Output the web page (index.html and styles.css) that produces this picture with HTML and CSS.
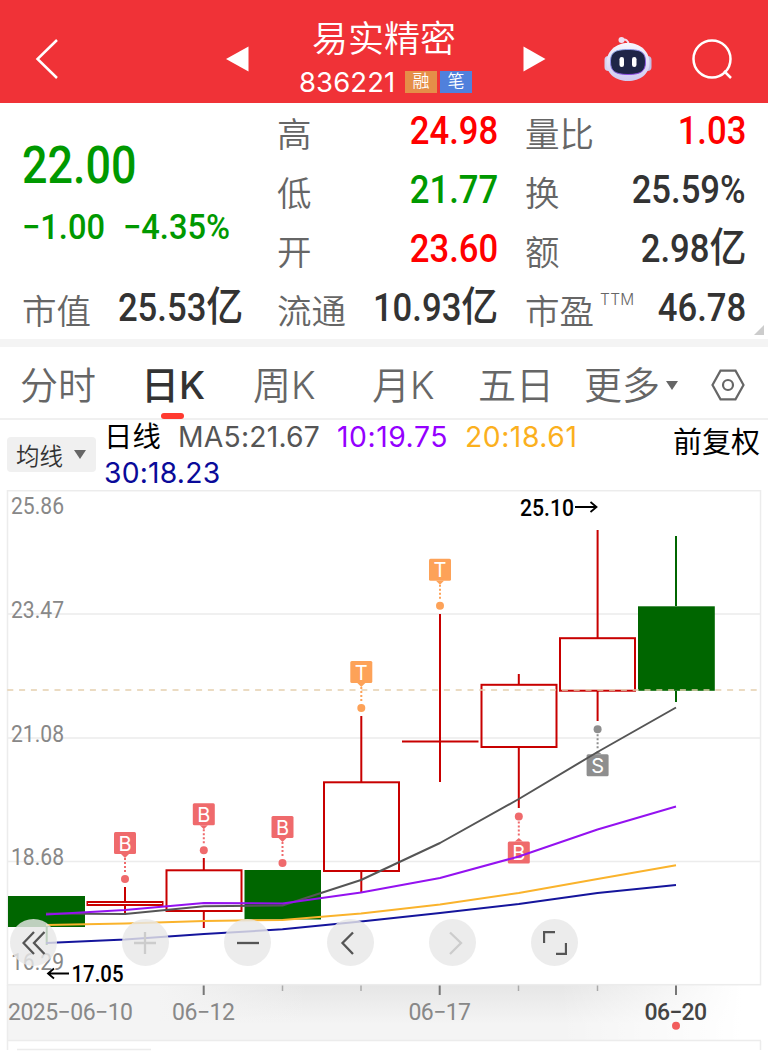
FILE: index.html
```html
<!DOCTYPE html>
<html lang="zh-CN">
<head>
    <meta charset="UTF-8">
    <title>易实精密 836221</title>
    <link rel="stylesheet" href="styles.css">
</head>
<body>
    <header class="header">
        <svg class="back" width="24" height="42" viewBox="0 0 24 42"><path d="M22 2 L2.500 21 L22 40"/></svg>
        <svg class="prev" width="23" height="26" viewBox="0 0 23 26"><path d="M0 13 L22.500 0.500 V25.500 Z"/></svg>
        <div class="stock">
            <div class="stock-name">易实精密</div>
            <div class="stock-code">
                <span class="code">836221</span>
                <span class="tag orange">融</span>
                <span class="tag blue">笔</span>
            </div>
        </div>
        <svg class="next" width="23" height="26" viewBox="0 0 23 26"><path d="M0.500 0.500 L22.500 13 L0.500 25.500 Z"/></svg>
        <svg class="robot" width="50" height="46" viewBox="0 0 50 46">
            <defs>
                <linearGradient id="head" x1="0" y1="0" x2="0" y2="1">
                    <stop offset="0" stop-color="#f7f6ff"/>
                    <stop offset="1" stop-color="#cfcaf0"/>
                </linearGradient>
                <linearGradient id="rim" x1="0" y1="0" x2="0.600" y2="1">
                    <stop offset="0" stop-color="#8fb6ea"/>
                    <stop offset="1" stop-color="#8a45e0"/>
                </linearGradient>
            </defs>
            <path d="M18 4 Q25.500 2 25.500 9" fill="none" stroke="#f2dfef" stroke-width="2"/>
            <circle cx="18.500" cy="4" r="3" fill="#eedff2"/>
            <rect x="1.500" y="20" width="8" height="15" rx="4" fill="#d6d2ee"/>
            <rect x="40.500" y="20" width="8" height="15" rx="4" fill="#c4bfe6"/>
            <path d="M25 7 C37 7 46.500 15 46.500 27 C46.500 38 37 45 25 45 C13 45 3.500 38 3.500 27 C3.500 15 13 7 25 7 Z" fill="url(#head)"/>
            <path d="M25 13.500 C39 13.500 42.500 17 42.500 26 C42.500 35 38 38.500 25 38.500 C12 38.500 7.500 35 7.500 26 C7.500 17 11 13.500 25 13.500 Z" fill="#1f2547" stroke="url(#rim)"/>
            <rect x="16.500" y="21" width="4.500" height="10" rx="2.200" fill="#fff"/>
            <rect x="29" y="21" width="4.500" height="10" rx="2.200" fill="#fff"/>
        </svg>
        <svg class="search" width="42" height="42" viewBox="0 0 42 42"><circle cx="21" cy="21" r="18.500"/><path d="M33 33 L40 40"/></svg>
    </header>

    <section class="quote">
        <div class="price">
            <div class="last"><span class="num">22.00</span></div>
            <div class="change"><span class="num">−1.00</span><span class="num">−4.35%</span></div>
        </div>
        <div class="stat"><span class="label">高</span><span class="num up">24.98</span></div>
        <div class="stat"><span class="label">量比</span><span class="num up">1.03</span></div>
        <div class="stat"><span class="label">低</span><span class="num down">21.77</span></div>
        <div class="stat"><span class="label">换</span><span class="num">25.59%</span></div>
        <div class="stat"><span class="label">开</span><span class="num up">23.60</span></div>
        <div class="stat"><span class="label">额</span><span class="num">2.98<i>亿</i></span></div>
        <div class="stat"><span class="label">市值</span><span class="num">25.53<i>亿</i></span></div>
        <div class="stat"><span class="label">流通</span><span class="num">10.93<i>亿</i></span></div>
        <div class="stat"><span class="label">市盈<sup>TTM</sup></span><span class="num">46.78</span></div>
        <div class="corner"></div>
    </section>

    <nav class="tabs">
        <span class="tab">分时</span>
        <span class="tab active">日K</span>
        <span class="tab">周K</span>
        <span class="tab">月K</span>
        <span class="tab">五日</span>
        <span class="tab more">更多<svg width="12" height="9" viewBox="0 0 12 9"><path d="M0 0 H12 L6 9 Z"/></svg></span>
        <svg class="settings" width="34" height="32" viewBox="0 0 34 32"><path d="M9.500 1.700 H24.500 L32.500 16 L24.500 30.300 H9.500 L1.500 16 Z"/><circle cx="17" cy="16" r="5"/></svg>
    </nav>

    <section class="indicator">
        <div class="select">均线<svg width="12" height="9" viewBox="0 0 12 9"><path d="M0 0 H12 L6 9 Z"/></svg></div>
        <div class="averages">
            <span class="period">日线</span>
            <span class="ma5">MA5:21.67</span>
            <span class="ma10">10:19.75</span>
            <span class="ma20">20:18.61</span>
            <span class="ma30">30:18.23</span>
        </div>
        <div class="adjust">前复权</div>
    </section>

    <section class="chart">
        <svg class="kline" width="768" height="561" viewBox="0 490 768 561">
            <defs>
                <linearGradient id="band" x1="0" y1="0" x2="0" y2="1">
                    <stop offset="0" stop-color="#e6e6e6"/>
                    <stop offset="0.700" stop-color="#f4f4f4"/>
                    <stop offset="1" stop-color="#f4f4f4"/>
                </linearGradient>
                <linearGradient id="fadeLeft" x1="0" y1="0" x2="1" y2="0">
                    <stop offset="0.500" stop-color="#f4f4f4"/>
                    <stop offset="1" stop-color="#f4f4f4" stop-opacity="0"/>
                </linearGradient>
                <linearGradient id="fadeRight" x1="0" y1="0" x2="1" y2="0">
                    <stop offset="0" stop-color="#fff" stop-opacity="0"/>
                    <stop offset="0.900" stop-color="#fff"/>
                </linearGradient>
                <g id="pinDown">
                    <rect x="-11" y="-11" width="22" height="22" rx="1.500"/>
                    <path d="M-4 11 L0 15 L4 11 Z"/>
                    <path class="dots" d="M0 15 V29"/>
                    <circle cy="36" r="4"/>
                </g>
                <g id="pinUp">
                    <rect x="-11" y="-11" width="22" height="22" rx="1.500"/>
                    <path d="M-4 -11 L0 -14.500 L4 -11 Z"/>
                    <path class="dots" d="M0 -17 V-33"/>
                    <circle cy="-36" r="4"/>
                </g>
            </defs>

            <!-- date axis background -->
            <rect x="7" y="985" width="754" height="55" fill="url(#band)"/>
            <rect x="7" y="985" width="300" height="55" fill="url(#fadeLeft)"/>
            <rect x="560" y="985" width="201" height="55" fill="url(#fadeRight)"/>

            <!-- frame and grid -->
            <g class="grid">
                <rect x="7.500" y="490.700" width="753" height="494"/>
                <path d="M8 614 H760 M8 738 H760 M8 861.500 H760"/>
                <path d="M7.500 985 V1050 M7.500 1040.500 H761 M760.500 1041 V1050"/>
                <path d="M17 1049.500 H151"/>
            </g>
            <g class="ticks">
                <path d="M203.700 985.500 V995 M439.700 985.500 V995 M676 985.500 V995"/>
                <path class="minor" d="M282.500 985.500 V991 M361 985.500 V991 M518.500 985.500 V991 M597.500 985.500 V991"/>
            </g>

            <g class="scale">
                <text x="11" y="514" textLength="53" lengthAdjust="spacingAndGlyphs">25.86</text>
                <text x="11" y="617.500" textLength="53" lengthAdjust="spacingAndGlyphs">23.47</text>
                <text x="11" y="741.500" textLength="53" lengthAdjust="spacingAndGlyphs">21.08</text>
                <text x="11" y="864.500" textLength="53" lengthAdjust="spacingAndGlyphs">18.68</text>
                <text x="11" y="969.500" textLength="53" lengthAdjust="spacingAndGlyphs">16.29</text>
            </g>

            <!-- candles -->
            <g class="fall">
                <rect x="8" y="896" width="77" height="31"/>
                <rect x="244.500" y="870" width="76.500" height="49.500"/>
                <rect x="638" y="606.300" width="76.800" height="84.500"/>
                <path d="M46.700 927 V945 M676 536 V606 M676 691 V702"/>
            </g>
            <g class="rise">
                <rect x="87.500" y="902" width="75" height="3"/>
                <rect x="166.500" y="870.300" width="75" height="40.700"/>
                <rect x="324" y="782.300" width="75" height="88.700"/>
                <rect x="481.500" y="684.800" width="75" height="62.200"/>
                <rect x="560" y="638.200" width="75" height="52.500"/>
                <path d="M125 887 V902 M125 905 V915 M203.800 858 V870 M203.800 911 V928"/>
                <path d="M361.300 716 V782 M361.300 871 V893 M440 614 V782 M402 741.500 H478.500"/>
                <path d="M518.800 674 V685 M518.800 747 V808 M597.600 530 V638 M597.600 691 V721"/>
            </g>
            <path class="current" d="M7.300 690 H760"/>

            <!-- trade points -->
            <g class="point buy">
                <use href="#pinDown" x="125" y="843"/><text x="125" y="850.500">B</text>
                <use href="#pinDown" x="203.800" y="814.300"/><text x="203.800" y="821.800">B</text>
                <use href="#pinDown" x="282.500" y="827"/><text x="282.500" y="834.500">B</text>
                <use href="#pinUp" x="518.800" y="852.500"/><text x="518.800" y="860">B</text>
            </g>
            <g class="point trade">
                <use href="#pinDown" x="361.300" y="672"/><text x="361.300" y="679.500">T</text>
                <use href="#pinDown" x="440" y="569.800"/><text x="440" y="577.300">T</text>
            </g>
            <g class="point sell">
                <use href="#pinUp" x="597.600" y="765.300"/><text x="597.600" y="772.800">S</text>
            </g>

            <g class="lines">
                <polyline stroke="#555" points="46,913.500 125,914 204,906.300 282.500,905.500 361,880 440,843 518.800,799 597.500,752 676,707.500"/>
                <polyline stroke="#9412f0" points="46,914.500 125,910 204,903 282.500,903.500 361,892.500 440,878 518.800,856.500 597.500,829.500 676,806.500"/>
                <polyline stroke="#fab32c" points="46,925 125,923.500 204,921 282.500,920 361,913.500 440,904.500 518.800,893 597.500,879 676,865.300"/>
                <polyline stroke="#15159c" points="46,943 125,939.500 204,934 282.500,929.300 361,921.500 440,913 518.800,904 597.500,893 676,885"/>
            </g>

            <g class="extreme">
                <text x="520" y="515.500" textLength="54" lengthAdjust="spacingAndGlyphs">25.10</text>
                <path d="M575 507 H596.500 M590.500 502 L596.500 507 L590.500 512"/>
                <text x="71.500" y="981.500" textLength="52" lengthAdjust="spacingAndGlyphs">17.05</text>
                <path d="M69 973.500 H48 M54 968.500 L48 973.500 L54 978.500"/>
            </g>

            <g class="dates">
                <text x="8" y="1020" textLength="125">2025−06−10</text>
                <text x="172" y="1020" textLength="63">06−12</text>
                <text x="408.500" y="1020" textLength="62.500">06−17</text>
                <text class="today" x="644.500" y="1020" textLength="62.500">06−20</text>
                <circle cx="676" cy="1025.700" r="4"/>
            </g>
        </svg>

        <div class="controls">
            <button class="first"><svg width="24" height="24" viewBox="0 0 24 24"><path d="M12 1 L1.500 12 L12 23 M22.500 1 L12 12 L22.500 23"/></svg></button>
            <button class="off"><svg width="24" height="24" viewBox="0 0 24 24"><path d="M12 1 V23 M1 12 H23"/></svg></button>
            <button><svg width="24" height="24" viewBox="0 0 24 24"><path d="M1 12 H23"/></svg></button>
            <button><svg width="24" height="24" viewBox="0 0 24 24"><path d="M15 1.500 L4.500 12 L15 23"/></svg></button>
            <button class="off"><svg width="24" height="24" viewBox="0 0 24 24"><path d="M9 1.500 L20 12 L9 23"/></svg></button>
            <button><svg width="24" height="24" viewBox="0 0 24 24"><path d="M1 12 V1 H12 M13 23 H23 V12"/></svg></button>
        </div>
    </section>
</body>
</html>
```

FILE: styles.css
```css
* {
    box-sizing: border-box;
}

body {
    margin: 0;
    width: 768px;
    height: 1051px;
    overflow: hidden;
    background: #fff;
    color: #333;
    font-family: Inter, "Noto Sans CJK SC", sans-serif;
}

svg {
    display: block;
    flex: none;
}

/* header */
.header {
    display: flex;
    align-items: center;
    height: 103px;
    padding: 15px 34px 0 35px;
    background: #f03237;
    color: #fff;
}

.header svg {
    fill: #fff;
}

.header .back,
.header .search {
    fill: none;
    stroke: #fff;
    stroke-width: 2.500;
}

.prev {
    margin-left: 167px;
}

.stock {
    width: 174px;
    margin: 0 50px;
}

.stock-name {
    padding-right: 4px;
    font-size: 36px;
    font-weight: 350;
    line-height: 45px;
    text-align: center;
    white-space: nowrap;
}

.stock-code {
    display: flex;
    align-items: center;
    height: 40px;
}

.code {
    width: 106px;
    font-size: 27.500px;
    line-height: 40px;
    letter-spacing: 0.100px;
}

.tag {
    width: 32px;
    height: 22px;
    font-size: 17px;
    font-weight: 350;
    line-height: 21px;
    text-align: center;
}

.orange {
    background: #e58e48;
}

.blue {
    margin-left: 3px;
    background: #5080dc;
}

.robot {
    margin-left: 57px;
}

.search {
    margin-left: 38px;
}

/* quote */
.quote {
    position: relative;
    display: grid;
    grid-template-columns: 255px 248px 221px;
    grid-template-rows: repeat(4, 59px);
    height: 244px;
    padding-left: 22px;
    border-bottom: 8px solid #f4f4f4;
}

.price {
    grid-row: span 3;
    color: #009900;
}

.num {
    display: inline-block;
    font-family: Roboto, "Noto Sans CJK SC", sans-serif;
    font-size: 38.500px;
    font-weight: 500;
    line-height: 56px;
    white-space: nowrap;
    transform: scaleX(0.900);
    transform-origin: right;
}

.num i {
    font-size: 41px;
    font-style: normal;
    line-height: 1;
}

.price .num {
    transform-origin: left;
}

.last {
    height: 60px;
    margin-top: 33px;
}

.last .num {
    font-size: 51px;
    line-height: 60px;
    transform: scaleX(0.880);
}

.change {
    display: flex;
    height: 56px;
}

.change .num {
    width: 101px;
    font-size: 34.700px;
    line-height: 62px;
    transform: scaleX(0.940);
}

.stat {
    display: flex;
    justify-content: space-between;
    width: 221px;
    height: 59px;
}

.label {
    color: #666;
    font-size: 34.500px;
    font-weight: 350;
    line-height: 64px;
    white-space: nowrap;
}

.label sup {
    margin-left: 6px;
    font-size: 15.500px;
    line-height: 0;
    letter-spacing: 0.300px;
    vertical-align: 19px;
}

.up {
    color: #ff0000;
}

.down {
    color: #009900;
}

.corner {
    position: absolute;
    right: 4px;
    bottom: 4px;
    border-left: 10px solid transparent;
    border-bottom: 10px solid #ccc;
}

/* period tabs */
.tabs {
    display: grid;
    grid-template-columns: 121px 112px 119px 106px 106px 127px 34px;
    align-items: center;
    height: 73px;
    padding-left: 20px;
    border-bottom: 2px solid #f0f0f0;
    color: #666;
    font-size: 38px;
    font-weight: 350;
    line-height: 73px;
}

.tab {
    padding-top: 2px;
}

.active {
    position: relative;
    color: #333;
    font-weight: 500;
}

.active::after {
    content: "";
    position: absolute;
    left: 20px;
    bottom: 3px;
    width: 23px;
    height: 6px;
    border-radius: 3px;
    background: #ff3a30;
}

.more {
    display: flex;
    align-items: center;
    gap: 6px;
}

.more svg,
.select svg {
    fill: #666;
}

.settings {
    fill: none;
    stroke: #666;
    stroke-width: 2.200;
}

/* moving averages */
.indicator {
    display: flex;
    height: 70px;
    padding: 0 8px 0 7px;
}

.select {
    display: flex;
    align-items: center;
    gap: 11px;
    width: 89px;
    height: 35px;
    margin-top: 17px;
    padding-left: 9px;
    border-radius: 4px;
    background: #f0f0f0;
    font-size: 23.500px;
    font-weight: 350;
    white-space: nowrap;
}

.averages {
    display: flex;
    flex-wrap: wrap;
    align-content: flex-start;
    column-gap: 17px;
    width: 500px;
    margin-left: 8px;
    font-size: 28.300px;
    line-height: 35.500px;
    letter-spacing: 0.200px;
}

.period {
    color: #000;
}

.ma5 {
    color: #555;
}

.ma10 {
    color: #9400ff;
    letter-spacing: 0.550px;
}

.ma20 {
    color: #fbb01e;
    letter-spacing: 0.550px;
}

.ma30 {
    color: #0a0a99;
}

.adjust {
    margin-left: auto;
    color: #000;
    font-size: 29px;
    line-height: 45px;
}

/* k-line chart */
.chart {
    position: relative;
}

.kline text {
    font-family: Roboto, sans-serif;
    font-size: 23px;
}

.grid {
    fill: none;
    stroke: #ececec;
    stroke-width: 1.500;
}

.ticks {
    stroke: #777;
    stroke-width: 2;
}

.minor {
    stroke: #aaa;
    stroke-width: 1.500;
}

.scale text,
.dates text {
    fill: #888;
}

.dates .today {
    fill: #444;
    font-weight: 500;
}

.dates circle {
    fill: #f25c5c;
}

.fall {
    fill: #006600;
}

.fall path {
    stroke: #006600;
    stroke-width: 2;
}

.rise {
    fill: none;
    stroke: #c80000;
    stroke-width: 2;
}

.current {
    stroke: #e5cfae;
    stroke-width: 1.700;
    stroke-dasharray: 6 5.800;
}

.dots {
    stroke-width: 2;
    stroke-dasharray: 2 2;
}

.buy {
    fill: #ef6a6c;
}

.trade {
    fill: #fda258;
}

.sell {
    fill: #8e8e8e;
}

.buy use {
    stroke: #ef6a6c;
    stroke-width: 0;
}

.trade use {
    stroke: #fda258;
    stroke-width: 0;
}

.sell use {
    stroke: #8e8e8e;
    stroke-width: 0;
}

.kline .point text {
    fill: #fff;
    font-family: Inter, sans-serif;
    font-size: 20px;
    text-anchor: middle;
}

.lines {
    fill: none;
    stroke-width: 2;
    stroke-linejoin: round;
}

.extreme text {
    fill: #000;
    font-weight: 500;
}

.extreme path {
    fill: none;
    stroke: #000;
    stroke-width: 1.800;
}

.controls {
    position: absolute;
    top: 429px;
    left: 10px;
    display: flex;
    gap: 55.400px;
}

.controls button {
    display: flex;
    align-items: center;
    justify-content: center;
    width: 47px;
    height: 47px;
    padding: 0;
    border: 0;
    border-radius: 50%;
    background: rgba(232, 232, 232, 0.820);
}

.controls .first {
    margin-right: 9.500px;
}

.controls svg {
    fill: none;
    stroke: #555;
    stroke-width: 2.300;
}

.controls .off svg {
    stroke: #ccc;
}
```
